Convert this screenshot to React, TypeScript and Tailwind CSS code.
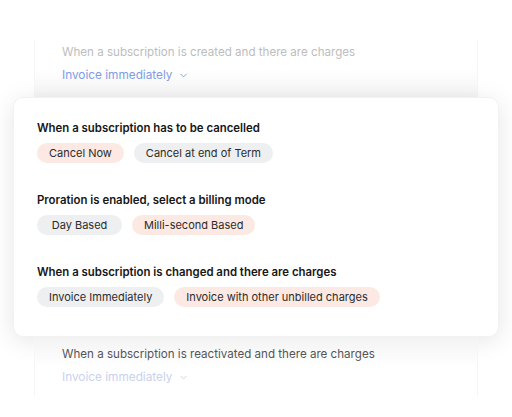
import { ChevronDown } from 'lucide-react';

type Option = { label: string; active?: boolean };

const sections: { title: string; options: Option[] }[] = [
  {
    title: 'When a subscription has to be cancelled',
    options: [{ label: 'Cancel Now', active: true }, { label: 'Cancel at end of Term' }],
  },
  {
    title: 'Proration is enabled, select a billing mode',
    options: [{ label: 'Day Based' }, { label: 'Milli-second Based', active: true }],
  },
  {
    title: 'When a subscription is changed and there are charges',
    options: [{ label: 'Invoice Immediately' }, { label: 'Invoice with other unbilled charges', active: true }],
  },
];

function Pill({ label, active }: Option) {
  return (
    <span
      className={`h-[20px] min-w-[85px] px-[12px] rounded-full flex items-center justify-center text-[11px] text-[#2b2b2b] ${
        active ? 'bg-[#fde9e3]' : 'bg-[#eeeff1]'
      }`}
    >
      {label}
    </span>
  );
}

export default function App() {
  return (
    <div
      className="w-[512px] h-[417px] bg-white overflow-hidden"
      style={{ fontFamily: 'Inter, "Noto Sans", sans-serif' }}
    >
      {/* faded item above */}
      <div className="mx-[34px] mt-[40px] h-[57px] px-[27px] pt-[3px] border-x border-[#f6f6f6] bg-gradient-to-b from-white via-white to-[#f5f5f5]">
        <p className="text-[11.6px] leading-[18px] text-[#bdbdbd]">When a subscription is created and there are charges</p>
        <div className="mt-[5px] flex items-center gap-[5px] text-[11.8px] leading-[18px] text-[#7d9ce6]">
          Invoice immediately
          <ChevronDown size={11} strokeWidth={2} />
        </div>
      </div>

      {/* main card */}
      <div className="mx-[13px] h-[240px] rounded-[10px] bg-white shadow-[0_4px_24px_rgba(0,0,0,0.10)] border border-[#f2f2f2] px-[23px] pt-[22px] flex flex-col gap-[29px]">
        {sections.map((s) => (
          <div key={s.title} className="flex flex-col gap-[7px]">
            <h3 className="text-[11.4px] leading-[16px] font-semibold text-[#161616]">{s.title}</h3>
            <div className="flex gap-[10px]">
              {s.options.map((o) => (
                <Pill key={o.label} {...o} />
              ))}
            </div>
          </div>
        ))}
      </div>

      {/* faded item below */}
      <div className="mx-[34px] h-[60px] px-[27px] pt-[8px] border-x border-[#f6f6f6] bg-gradient-to-b from-[#f3f3f3] via-white to-white">
        <p className="text-[11.6px] leading-[18px] text-[#555555]">When a subscription is reactivated and there are charges</p>
        <div className="mt-[5px] flex items-center gap-[5px] text-[11.8px] leading-[18px] text-[#c9d1ef]">
          Invoice immediately
          <ChevronDown size={11} strokeWidth={2} />
        </div>
      </div>
    </div>
  );
}
